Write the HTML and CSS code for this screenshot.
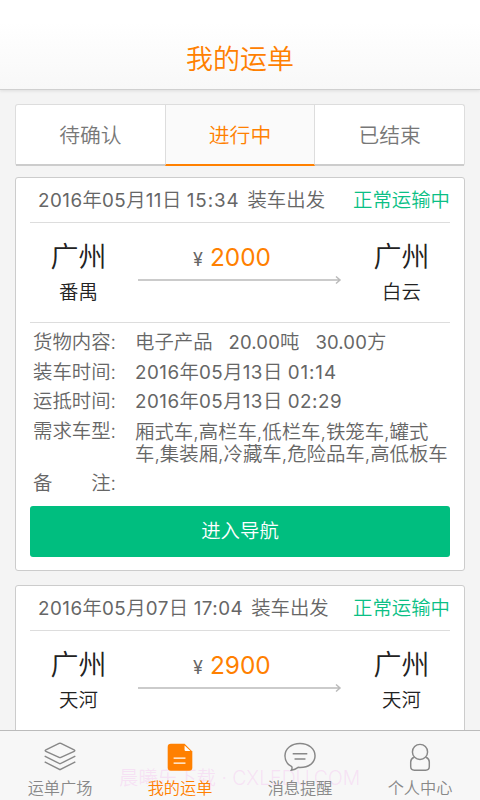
FILE: index.html
```html
<!DOCTYPE html>
<html lang="zh-CN">
<head>
<meta charset="utf-8">
<title>我的运单</title>
<link rel="stylesheet" href="styles.css">
</head>
<body>
<div class="app">
  <header class="header"><h1>我的运单</h1></header>
  <main class="content">
    <nav class="tabs">
      <div class="tab">待确认</div>
      <div class="tab active">进行中</div>
      <div class="tab">已结束</div>
    </nav>
    <section class="card">
      <div class="card-head">
        <div class="when"><span class="n">2016</span>年<span class="n">05</span>月<span class="n">11</span>日 <span class="n time">15:34</span> <span class="event">装车出发</span></div>
        <div class="status">正常运输中</div>
      </div>
      <div class="route">
        <div class="place"><div class="city">广州</div><div class="area">番禺</div></div>
        <div class="middle">
          <div class="price"><span class="yen">¥</span>2000</div>
          <svg class="arrow" viewBox="0 0 204 10"><path d="M0 5H202M198 1.5L202 5L198 8.500"/></svg>
        </div>
        <div class="place"><div class="city">广州</div><div class="area">白云</div></div>
      </div>
      <dl class="details">
        <dt>货物内容:</dt><dd class="goods"><span>电子产品</span><span><span class="n">20.00</span>吨</span><span><span class="n">30.00</span>方</span></dd>
        <dt>装车时间:</dt><dd><span class="n">2016</span>年<span class="n">05</span>月<span class="n">13</span>日 <span class="n time">01:14</span></dd>
        <dt>运抵时间:</dt><dd><span class="n">2016</span>年<span class="n">05</span>月<span class="n">13</span>日 <span class="n">02:29</span></dd>
        <dt>需求车型:</dt><dd class="types">厢式车,高栏车,低栏车,铁笼车,罐式<br>车,集装厢,冷藏车,危险品车,高低板车</dd>
        <dt class="note"><span>备</span><span>注:</span></dt><dd></dd>
      </dl>
      <div class="button">进入导航</div>
    </section>
    <section class="card">
      <div class="card-head">
        <div class="when"><span class="n">2016</span>年<span class="n">05</span>月<span class="n">07</span>日 <span class="n">17:04</span> <span class="event">装车出发</span></div>
        <div class="status">正常运输中</div>
      </div>
      <div class="route">
        <div class="place"><div class="city">广州</div><div class="area">天河</div></div>
        <div class="middle">
          <div class="price"><span class="yen">¥</span>2900</div>
          <svg class="arrow" viewBox="0 0 204 10"><path d="M0 5H202M198 1.5L202 5L198 8.500"/></svg>
        </div>
        <div class="place"><div class="city">广州</div><div class="area">天河</div></div>
      </div>
    </section>
  </main>
  <footer class="tabbar">
    <div class="watermark">晨曦乐下载 · CXLEDU.COM</div>
    <div class="item">
      <svg viewBox="0 0 40 34"><path d="M19 2.700Q20 2.200 21 2.700L35.500 9.700Q37 10.500 35.500 11.300L21 18Q20 18.500 19 18L4.500 11.300Q3 10.500 4.500 9.700ZM3.200 16.500L20 25L36.800 16.500M3.200 23L20 31.500L36.800 23"/></svg>
      <span>运单广场</span>
    </div>
    <div class="item active">
      <svg viewBox="0 0 40 34"><path class="fill" d="M10 3H25L33.500 11.500V29Q33.500 32.500 30 32.500H10Q6.500 32.500 6.500 29V6.500Q6.500 3 10 3Z"/><path class="fold" d="M25 5V9.500Q25 11 26.500 11H31.500Z"/><path class="lines" d="M13 18.800H26M13 24.300H26"/></svg>
      <span>我的运单</span>
    </div>
    <div class="item">
      <svg viewBox="0 0 40 34"><path d="M11 28.200C6 25.800 3.500 21.500 3.500 16.300C3.500 8.500 10.500 2.700 20 2.700S36.500 8.500 36.500 16.300S29.500 29 20 29L18 28.900Q14.500 31.500 10.500 32Q11.700 30 11 28.200ZM12 14H28M14 19.700H26"/></svg>
      <span>消息提醒</span>
    </div>
    <div class="item">
      <svg viewBox="0 0 40 34"><circle cx="20" cy="12" r="8.300"/><path d="M13.300 17.800Q9.800 19.500 9.800 23V28Q9.800 32 13.800 32H26.200Q30.200 32 30.200 28V23Q30.200 19.500 26.700 17.800"/></svg>
      <span>个人中心</span>
    </div>
  </footer>
</div>
</body>
</html>
```
FILE: styles.css
```css
* { box-sizing: border-box; }
body {
  margin: 0;
  background: #f4f4f4;
  color: #666;
  font-family: Inter, "Noto Sans CJK SC", sans-serif;
  font-weight: 350;
  font-size: 19.4px;
}
.app {
  display: flex;
  flex-direction: column;
  width: 480px;
  height: 800px;
  overflow: hidden;
}
.header {
  flex: none;
  height: 90px;
  padding-top: 40px;
  background: linear-gradient(#fff 25%, #f8f8f8);
  border-bottom: 1px solid #d0d0d0;
  box-shadow: 0 1px 3px #ddd;
  text-align: center;
}
h1 {
  margin: 0;
  color: #ff8000;
  font-size: 27px;
  font-weight: 350;
  line-height: 40px;
}
.content {
  flex: 1;
  min-height: 0;
  overflow: hidden;
  padding: 14px 15px 0;
}
.tabs {
  display: flex;
  height: 62px;
  margin-bottom: 11px;
  background: #fff;
  border: 1px solid #ddd;
  border-bottom: 0;
  border-radius: 3px;
}
.tab {
  flex: 1;
  border-bottom: 2px solid #ccc;
  font-size: 20.8px;
  line-height: 62px;
  text-align: center;
  color: #777;
}
.tab.active {
  background: #fafafa;
  border-left: 1px solid #ddd;
  border-right: 1px solid #ddd;
  border-bottom-color: #ff8000;
  color: #ff8000;
}
.card {
  margin-bottom: 14px;
  padding: 0 14px 13px;
  background: #fff;
  border: 1px solid #ccc;
  border-radius: 3px;
}
.card-head {
  display: flex;
  justify-content: space-between;
  height: 45px;
  padding-left: 8px;
  border-bottom: 1px solid #ddd;
  line-height: 45px;
  white-space: nowrap;
}
.n { font-size: 18.8px; font-weight: 400; letter-spacing: .5px; }
.time { letter-spacing: .9px; }
.goods .n { font-size: 18.5px; letter-spacing: .15px; }
.event { margin-left: 2.5px; }
.status { color: #0abf85; }
.route {
  display: flex;
  height: 100px;
  border-bottom: 1px solid #ddd;
}
.place {
  width: 97px;
  padding-top: 14px;
  text-align: center;
  color: #222;
}
.city { font-size: 28px; line-height: 40px; }
.area { line-height: 30px; }
.middle { flex: 1; padding: 17px 0 0 11px; }
.price {
  height: 35px;
  padding-left: 55px;
  color: #ff8000;
  font-size: 24.4px;
  line-height: 34px;
  font-weight: 400;
}
.yen { margin-right: 7px; color: #666; font-size: 18px; }
.arrow { display: block; width: 204px; height: 10px; }
.arrow path { fill: none; stroke: #bbb; stroke-width: 1.5; }
.details {
  display: grid;
  grid-template-columns: 102px 1fr;
  margin: 0;
  padding: 5px 0 0 3px;
  line-height: 29.6px;
  white-space: nowrap;
}
.details dd { margin: 0; }
.goods { display: flex; gap: 16px; }
.types { padding-top: 4px; line-height: 22px; }
.note { display: flex; justify-content: space-between; width: 83px; padding-top: 4px; }
.button {
  height: 51px;
  margin-top: 8px;
  background: #00be7f;
  border-radius: 3px;
  color: #fff;
  line-height: 51px;
  text-align: center;
}
.tabbar {
  position: relative;
  display: flex;
  flex: none;
  height: 70px;
  background: #f7f7f7;
  border-top: 1px solid #bbb;
}
.item {
  position: relative;
  display: flex;
  flex: 1;
  flex-direction: column;
  align-items: center;
  padding-top: 10px;
  color: #888;
  font-size: 16.2px;
  line-height: 24px;
}
.item svg { width: 40px; height: 34px; margin-bottom: 4px; fill: none; stroke: #888; stroke-width: 1.6; }
.item.active { color: #ff8000; }
.item .fill { fill: #ff8000; stroke: none; }
.item .fold { fill: #fff; stroke: none; }
.item .lines { stroke: #fff; stroke-width: 1.5; }
.watermark {
  position: absolute;
  left: 119px;
  top: 34px;
  color: rgba(245, 150, 235, .22);
  font-size: 19.4px;
  line-height: 26px;
  white-space: nowrap;
}
```
